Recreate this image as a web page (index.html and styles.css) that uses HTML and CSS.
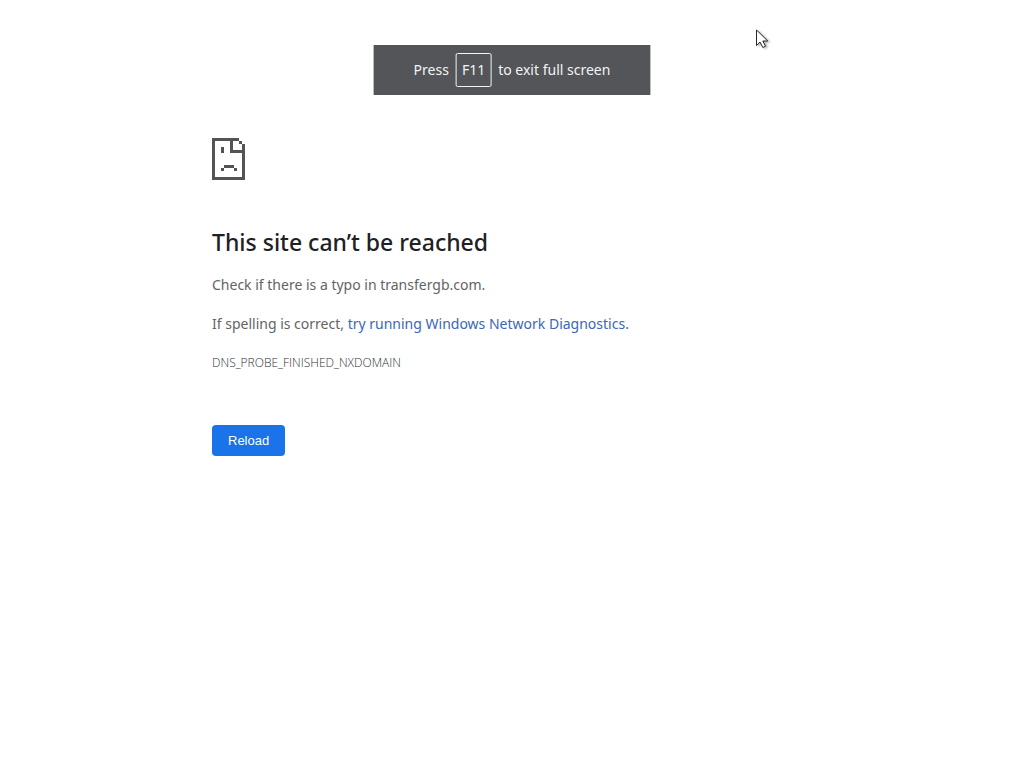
FILE: index.html
```html
<!DOCTYPE html>
<html lang="en">
<head>
  <meta charset="utf-8">
  <meta name="viewport" content="width=device-width, initial-scale=1">
  <title>transfergb.com</title>
  <link rel="stylesheet" href="styles.css">
</head>
<body>
  <div class="fullscreen-bubble">
    <span>Press</span>
    <kbd class="key">F11</kbd>
    <span>to exit full screen</span>
  </div>

  <main class="error-page">
    <svg class="icon" viewBox="0 0 33 42" width="33" height="42" shape-rendering="crispEdges" aria-hidden="true">
      <path fill="#535457" fill-rule="evenodd" d="M0 0h27v3h3v3h3v36H0zM3 3v36h27V15H18V3zM21 3v9h9V6h-3V3z"/>
      <path fill="#535457" d="M9 9h3v6H9zM12 27h10v3H12zM9 30h3v3H9zM22 30h3v3h-3z"/>
    </svg>
    <h1>This site can’t be reached</h1>
    <p>Check if there is a typo in transfergb.com.</p>
    <p>If spelling is correct, <a href="#">try running Windows Network Diagnostics</a>.</p>
    <div class="error-code">DNS_PROBE_FINISHED_NXDOMAIN</div>
    <button type="button" class="reload">Reload</button>
  </main>

  <svg class="cursor" viewBox="0 0 16 22" width="16" height="22" aria-hidden="true">
    <path fill="#fff" stroke="#25252c" stroke-linejoin="miter" d="M.5 1v15.500l3.500-3.500 2.800 5.500 2.700-1.300-2.700-5.200h5z"/>
  </svg>

  <script>
    document.querySelector('.reload').addEventListener('click', function () {
      location.reload();
    });
  </script>
</body>
</html>
```

FILE: styles.css
```css
body {
  margin: 0;
  background-color: #fff;
  color: #646464;
  font-family: "Noto Sans", sans-serif;
  font-size: 14px;
  line-height: 24px;
}

.fullscreen-bubble {
  position: fixed;
  top: 45px;
  left: 50%;
  transform: translateX(-50%);
  display: flex;
  align-items: center;
  gap: 7px;
  box-sizing: border-box;
  height: 50px;
  padding: 0 40px;
  background-color: #535559;
  color: #f1f3f4;
  font-size: 14px;
  white-space: nowrap;
}

.key {
  padding: 4px 5px;
  border: 1px solid #f1f3f4;
  border-radius: 2px;
  font-family: inherit;
}

.error-page {
  box-sizing: border-box;
  max-width: 600px;
  margin: 0 auto;
  padding-top: 138px;
}

.icon {
  display: block;
  margin-bottom: 46px;
}

h1 {
  margin: 0 0 15px;
  color: #202124;
  font-size: 23px;
  font-weight: 500;
  line-height: 32px;
}

p {
  margin: 0 0 15px;
}

a {
  color: #3c67b5;
  text-decoration: none;
}

.error-code {
  color: #333;
  font-family: "Open Sans", sans-serif;
  font-size: 12px;
  font-weight: 300;
}

.reload {
  display: block;
  margin-top: 50px;
  padding: 8px 16px;
  border: 0;
  border-radius: 4px;
  background-color: #1a73e8;
  color: #fff;
  font-family: Arial, "Liberation Sans", sans-serif;
  font-size: 13px;
  line-height: 15px;
  cursor: pointer;
}

/* pointer floats over the page */
.cursor {
  position: fixed;
  top: 29px;
  left: 756px;
  filter: drop-shadow(2px 1px 1px rgba(0, 0, 0, 0.3));
}
```
